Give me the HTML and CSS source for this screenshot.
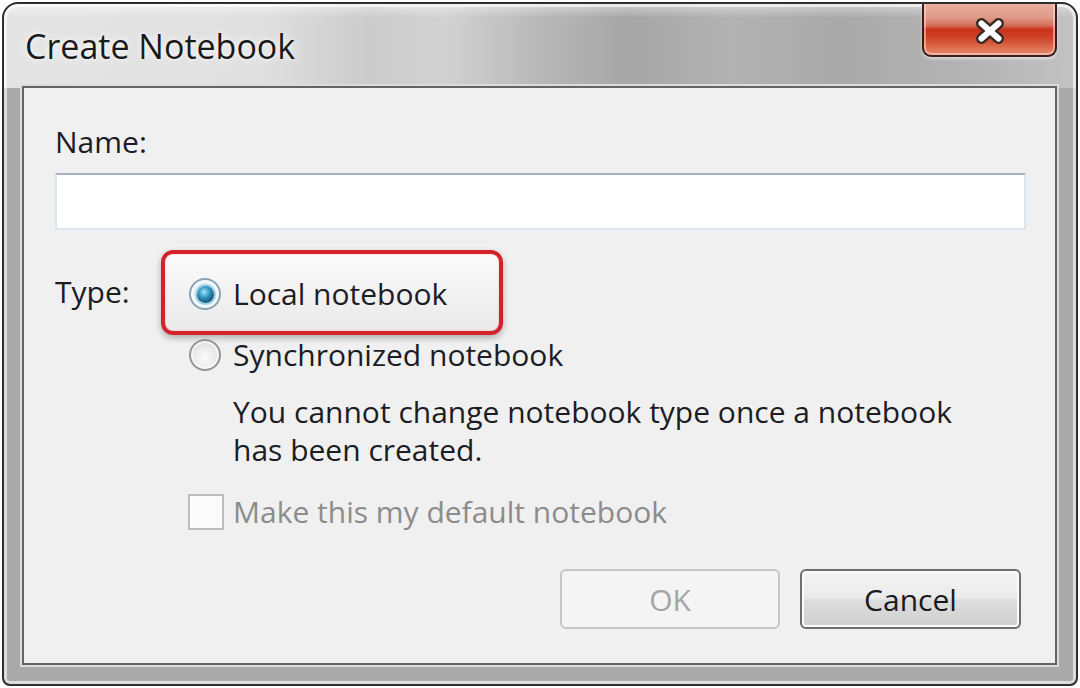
FILE: index.html
```html
<!DOCTYPE html>
<html lang="en">
<head>
<meta charset="utf-8">
<title>Create Notebook</title>
<link rel="stylesheet" href="styles.css">
</head>
<body>
<div class="window">
  <div class="titlebar">
    <span class="title">Create Notebook</span>
    <button class="close" aria-label="Close">
      <svg width="40" height="34" viewBox="0 0 40 34">
        <path d="M11.5 9.5 L28.5 24.5 M28.5 9.5 L11.5 24.5" stroke="#3a2a26" stroke-width="11" stroke-linecap="round"/>
        <path d="M11.5 9.5 L28.5 24.5 M28.5 9.5 L11.5 24.5" stroke="#ffffff" stroke-width="6" stroke-linecap="round"/>
      </svg>
    </button>
  </div>
  <div class="panel">
    <div class="field-label">Name:</div>
    <input class="name-input" type="text">
    <div class="type-row">
      <span class="type-label">Type:</span>
      <div class="options">
        <div class="opt highlight"><span class="radio checked"></span><span>Local notebook</span></div>
        <div class="opt opt-second"><span class="radio"></span><span>Synchronized notebook</span></div>
        <p class="note">You cannot change notebook type once a notebook<br>has been created.</p>
        <div class="opt opt-check disabled"><span class="checkbox"></span><span>Make this my default notebook</span></div>
      </div>
    </div>
    <div class="buttons">
      <button class="btn btn-disabled">OK</button>
      <button class="btn">Cancel</button>
    </div>
  </div>
</div>
</body>
</html>
```
FILE: styles.css
```css
* { box-sizing: border-box; }

html, body {
  margin: 0;
  padding: 0;
  background: #ffffff;
}

body {
  font-family: "Open Sans", "Noto Sans", sans-serif;
  color: #1c1c24;
}

.window {
  width: 1076px;
  height: 684px;
  margin: 2px;
  border: 2px solid #2e2e2e;
  border-radius: 16px 16px 8px 8px;
  background:
    linear-gradient(180deg, rgba(255,255,255,0.45) 0, rgba(255,255,255,0) 14px) top / 100% 84px no-repeat,
    linear-gradient(90deg, #e4e4e4 0, #e0e0e0 24%, #cbcbcb 34%, #d2d2d2 41%, #b8b8b8 50%, #a6a6a6 58%, #b2b2b2 68%, #a9a9a9 78%, #b4b4b4 90%, #c2c2c2 100%) top / 100% 84px no-repeat,
    #aaaaaa;
  box-shadow: inset 0 0 0 3px rgba(255,255,255,0.6);
  display: flex;
  flex-direction: column;
  padding: 0 19px 19px 18px;
  overflow: hidden;
}

.titlebar {
  height: 82px;
  display: flex;
  justify-content: space-between;
  align-items: flex-start;
  flex-shrink: 0;
}

.title {
  font-size: 34px;
  line-height: 40px;
  margin-top: 22px;
  margin-left: 3px;
  color: #1a1a1a;
  text-shadow: 0 0 8px rgba(255,255,255,0.95), 0 0 3px rgba(255,255,255,0.9);
}

.close {
  width: 135px;
  height: 55px;
  margin-top: -2px;
  margin-right: 0;
  padding: 0;
  border: 2px solid #3c1f18;
  border-top: none;
  border-radius: 0 0 9px 9px;
  background: linear-gradient(180deg, #eab1a2 0%, #df9987 30%, #d4705a 44%, #c8321a 52%, #cf4328 68%, #dd6f50 86%, #e58a6e 100%);
  box-shadow: inset 0 0 0 2px rgba(255,220,210,0.55), 0 2px 3px rgba(255,255,255,0.5);
  display: flex;
  align-items: center;
  justify-content: center;
}

.close svg { display: block; margin-top: 4px; }

.panel {
  flex: 1;
  position: relative;
  z-index: 0;
  background: #f0f0f0;
  border: 2px solid #646464;
  box-shadow: 0 0 0 2px #dcdcdc;
  padding: 34px 29px 0 31px;
  display: flex;
  flex-direction: column;
}

.field-label {
  font-size: 30px;
  line-height: 40px;
}

.name-input {
  margin-top: 11px;
  width: 100%;
  height: 57px;
  border: 2px solid #dbe5ee;
  border-top-color: #a3b1bf;
  background: #ffffff;
  font-family: inherit;
  font-size: 30px;
  padding: 0 8px;
  outline: none;
}

.type-row {
  display: flex;
  margin-top: 44px;
}

.type-label {
  width: 134px;
  flex-shrink: 0;
  font-size: 30px;
  line-height: 40px;
  margin-top: -2px;
}

.options {
  display: flex;
  flex-direction: column;
}

.opt {
  position: relative;
  display: flex;
  align-items: center;
  gap: 12px;
  height: 40px;
  font-size: 30px;
  line-height: 40px;
  white-space: nowrap;
}

.highlight::before {
  content: "";
  position: absolute;
  left: -28px;
  top: -24px;
  width: 334px;
  height: 77px;
  border: 4px solid #d3222c;
  border-radius: 12px;
  background: linear-gradient(180deg, #fbfbfb 0%, #f1f1f1 55%, #e9e9e9 100%);
  box-shadow: 0 3px 6px rgba(0,0,0,0.28), inset 0 0 2px rgba(255,120,120,0.5);
  z-index: -1;
}

.opt-second { margin-top: 21px; }

.radio {
  position: relative;
  width: 32px;
  height: 32px;
  flex-shrink: 0;
  border-radius: 50%;
  border: 2px solid #959595;
  background: radial-gradient(circle at 50% 60%, #fafafa 0, #ececec 45%, #cfcfcf 100%);
  box-shadow: inset 0 0 0 2px rgba(255,255,255,0.7);
}

.radio.checked {
  border-color: #8aa4b4;
  background: radial-gradient(circle, #cfeaf5 0, #e9f5fb 60%, #d4dde3 100%);
}

.radio.checked::after {
  content: "";
  position: absolute;
  left: 50%;
  top: 50%;
  width: 17px;
  height: 17px;
  margin: -8.5px 0 0 -8.5px;
  border-radius: 50%;
  background: radial-gradient(circle at 42% 35%, #a8e4f8 0, #3a9ac6 35%, #145a80 70%, #0c3c58 100%);
  box-shadow: 0 0 0 2px #9ccfe4;
}

.note {
  margin: 18px 0 0 44px;
  font-size: 30px;
  line-height: 38px;
  white-space: nowrap;
}

.opt-check {
  margin-top: 23px;
  margin-left: -1px;
  gap: 9px;
}

.disabled { color: #8c8c8c; }

.checkbox {
  width: 36px;
  height: 36px;
  flex-shrink: 0;
  border: 2px solid #bdbdbd;
  background: #fbfbfb;
}

.buttons {
  display: flex;
  justify-content: flex-end;
  gap: 20px;
  margin-top: 37px;
  margin-right: 5px;
}

.btn {
  width: 221px;
  height: 60px;
  border: 2px solid #6f6f6f;
  border-radius: 6px;
  background: linear-gradient(180deg, #f3f3f3 0%, #ebebeb 48%, #dddddd 52%, #cfcfcf 100%);
  box-shadow: inset 0 0 0 2px #fbfbfb;
  font-family: inherit;
  font-size: 30px;
  color: #1a1a1a;
  padding: 0;
}

.btn-disabled {
  width: 220px;
  border-color: #c6c6c6;
  background: #f4f4f4;
  box-shadow: none;
  color: #a4a4a4;
}
```
